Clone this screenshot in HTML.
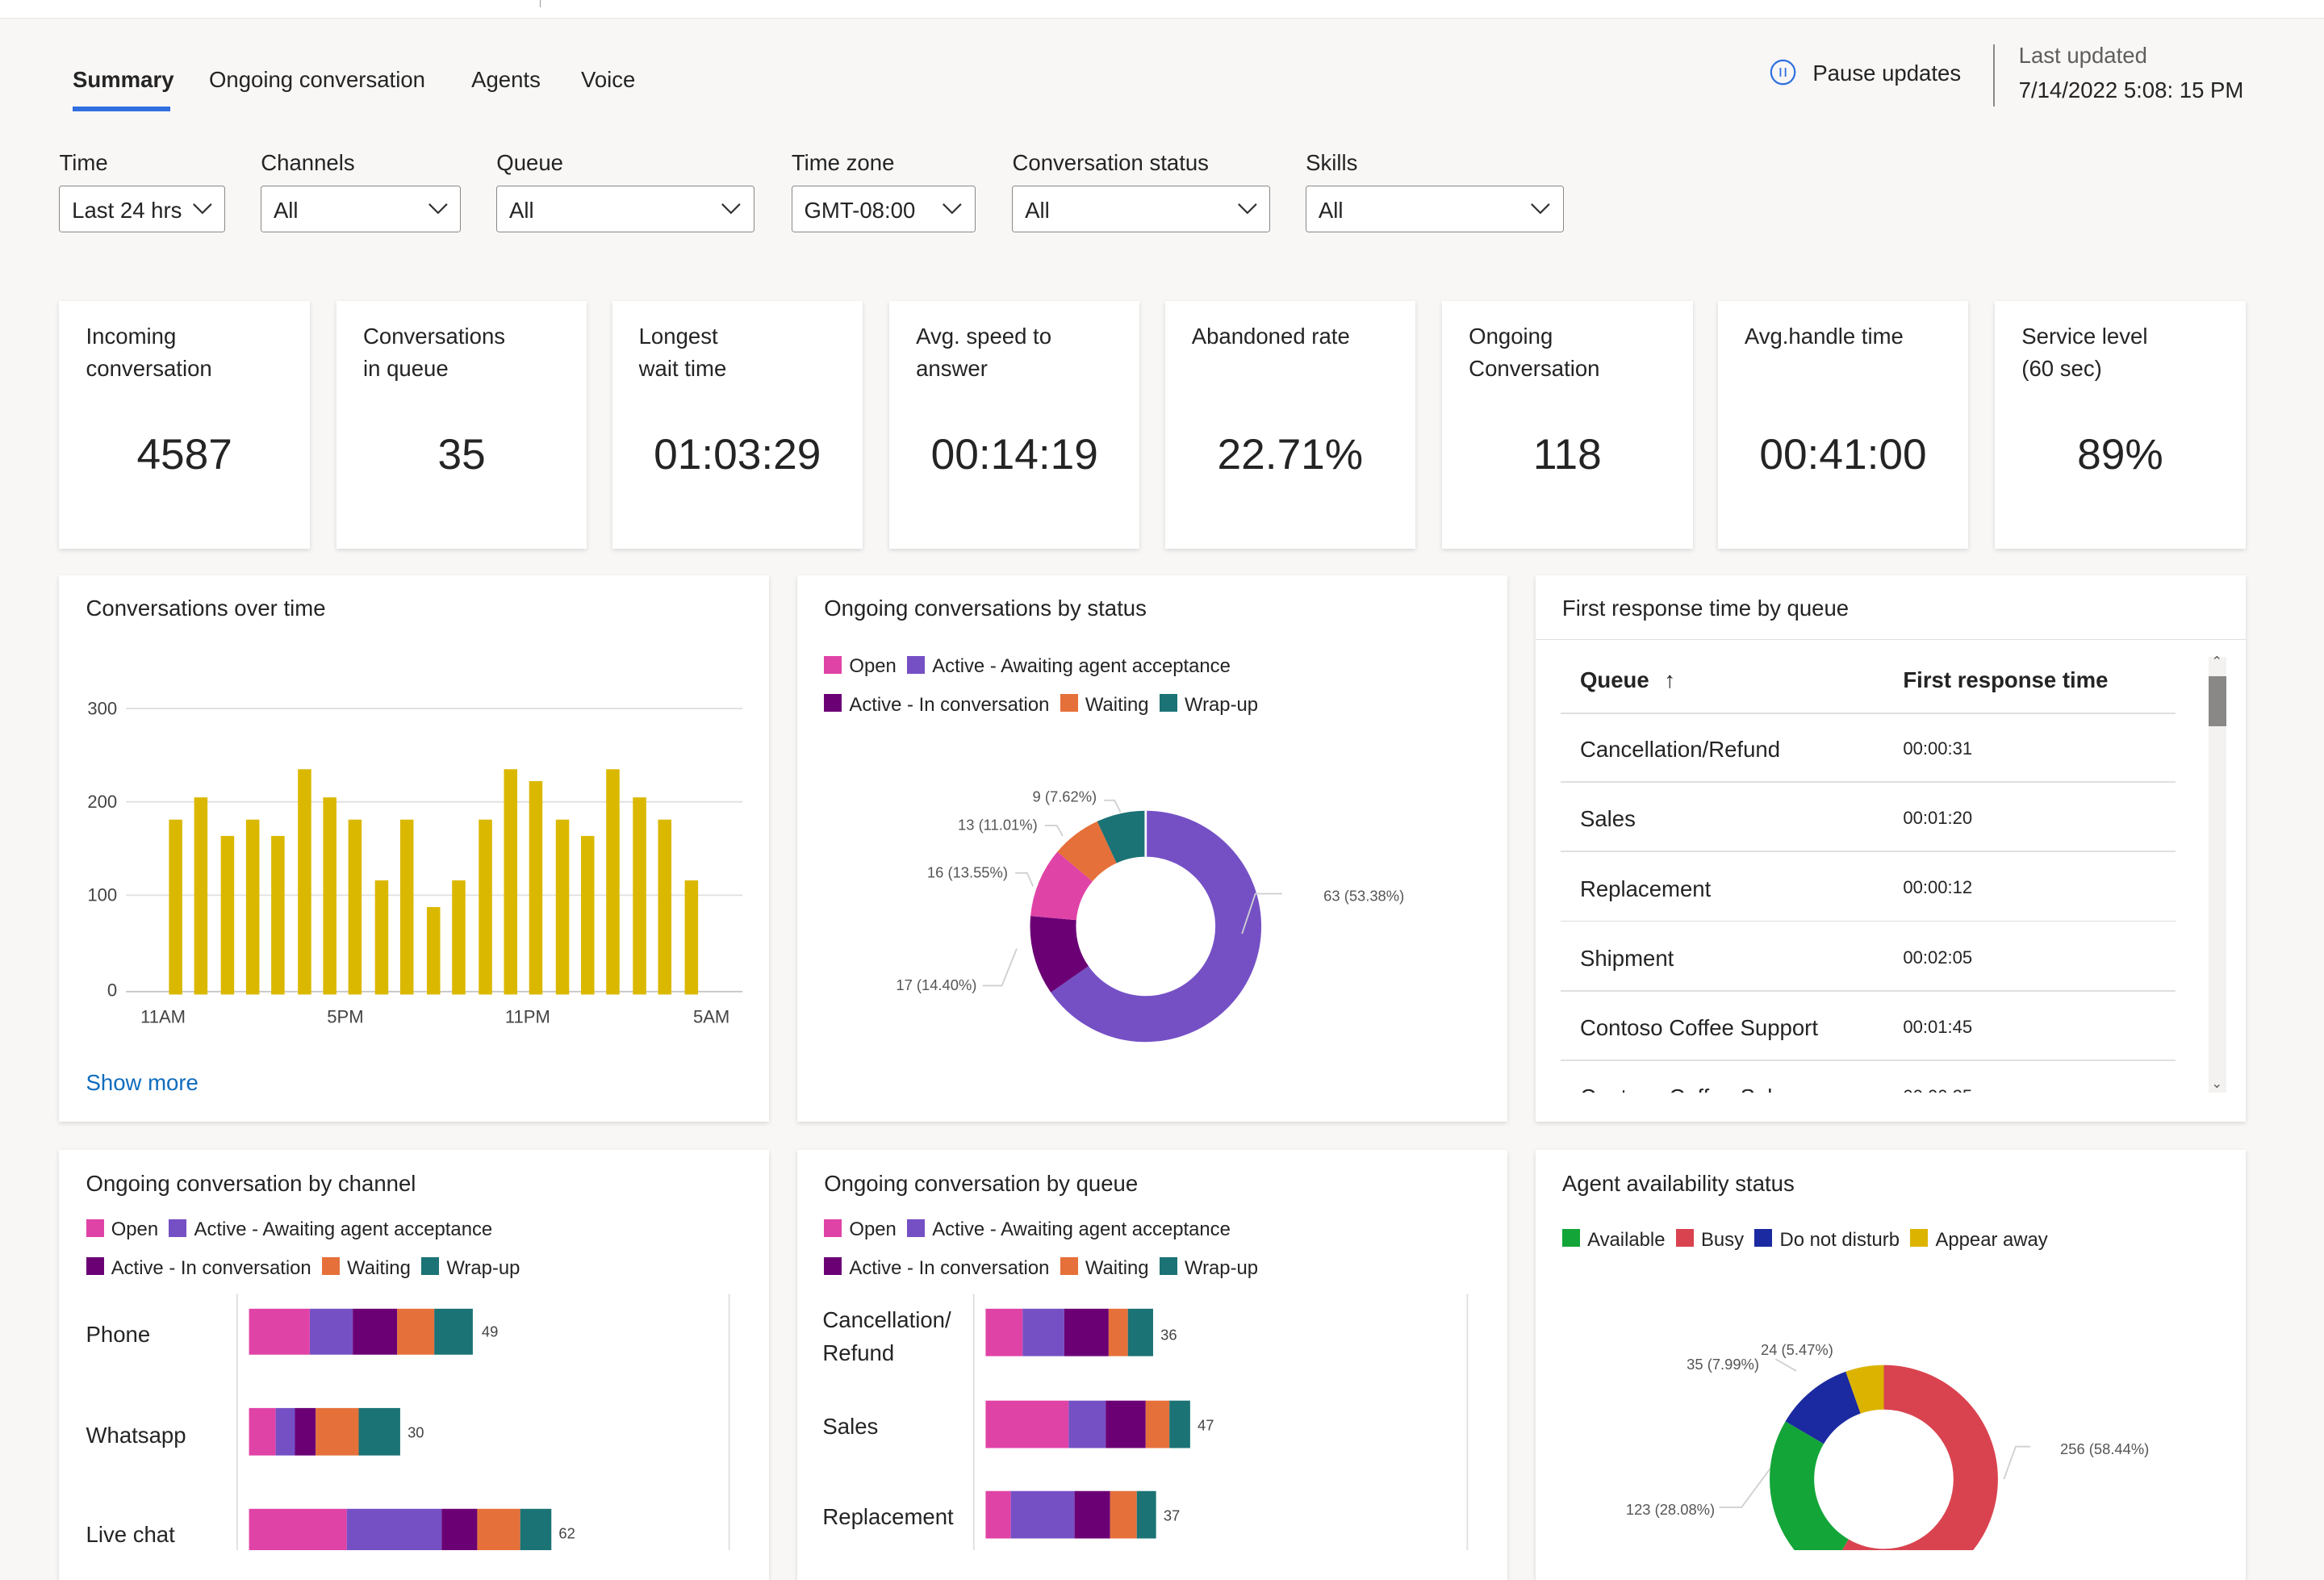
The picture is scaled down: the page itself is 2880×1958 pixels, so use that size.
<!DOCTYPE html>
<html><head><meta charset="utf-8"><style>
html,body{margin:0;padding:0;}
body{width:2880px;height:1920px;overflow:hidden;background:#f8f7f6;}
#r{zoom:1.83673;width:1568px;height:1046px;position:relative;font-family:"Liberation Sans",sans-serif;color:#242424;}
.a{position:absolute;white-space:nowrap;}
.card{position:absolute;background:#fff;box-shadow:0 1px 3px rgba(0,0,0,.13);}
.lbl{font-size:15px;}
.sel{position:absolute;top:125px;height:32px;border:1px solid #8a8886;border-radius:2px;background:#fff;box-sizing:border-box;font-size:15px;}
.sel span{position:absolute;left:8px;top:8px;}
.sel svg{position:absolute;right:8px;top:11px;}
.kt{position:absolute;left:18px;top:13px;font-size:15px;line-height:22px;}
.kv{position:absolute;left:0;right:0;top:87px;text-align:center;font-size:29px;}
.ct{position:absolute;left:18px;top:14px;font-size:15px;}
.sq{display:inline-block;width:12px;height:12px;vertical-align:-1px;margin-right:5px;}
.lg{font-size:13px;}
.row{position:absolute;left:1053px;width:415px;height:1px;background:#e1dfdd;}
</style></head><body><div id="r">
<div class="a" style="left:0;top:0;width:1568px;height:12px;background:#fff;border-bottom:1px solid #e8e6e4"></div>
<div class="a" style="left:364px;top:0;width:1px;height:5px;background:#999"></div>
<div class="a lbl" style="left:49px;top:45px;font-weight:bold;color:#242424">Summary</div>
<div class="a" style="left:49px;top:72px;width:66px;height:3px;background:#2f6fdf"></div>
<div class="a lbl" style="left:141px;top:45px">Ongoing conversation</div>
<div class="a lbl" style="left:318px;top:45px">Agents</div>
<div class="a lbl" style="left:392px;top:45px">Voice</div>
<svg class="a" style="left:1194px;top:40px" width="18" height="18"><circle cx="9" cy="9" r="8" fill="none" stroke="#2f6fdf" stroke-width="1.2"/><line x1="7.3" y1="6" x2="7.3" y2="12" stroke="#2f6fdf"/><line x1="10.7" y1="6" x2="10.7" y2="12" stroke="#2f6fdf"/></svg>
<div class="a lbl" style="left:1223px;top:41px">Pause updates</div>
<div class="a" style="left:1345px;top:30px;width:1px;height:42px;background:#8a8886"></div>
<div class="a lbl" style="left:1362px;top:29px;color:#605e5c">Last updated</div>
<div class="a lbl" style="left:1362px;top:52px">7/14/2022 5:08: 15 PM</div>

<div class="a lbl" style="left:40px;top:101px">Time</div>
<div class="a lbl" style="left:176px;top:101px">Channels</div>
<div class="a lbl" style="left:335px;top:101px">Queue</div>
<div class="a lbl" style="left:534px;top:101px">Time zone</div>
<div class="a lbl" style="left:683px;top:101px">Conversation status</div>
<div class="a lbl" style="left:881px;top:101px">Skills</div>
<div class="sel" style="left:40px;width:112px"><span>Last 24 hrs</span><svg width="14" height="9"><path d="M1 1L7 7L13 1" fill="none" stroke="#323130" stroke-width="1.2"/></svg></div>
<div class="sel" style="left:176px;width:135px"><span>All</span><svg width="14" height="9"><path d="M1 1L7 7L13 1" fill="none" stroke="#323130" stroke-width="1.2"/></svg></div>
<div class="sel" style="left:335px;width:174px"><span>All</span><svg width="14" height="9"><path d="M1 1L7 7L13 1" fill="none" stroke="#323130" stroke-width="1.2"/></svg></div>
<div class="sel" style="left:534px;width:124px"><span>GMT-08:00</span><svg width="14" height="9"><path d="M1 1L7 7L13 1" fill="none" stroke="#323130" stroke-width="1.2"/></svg></div>
<div class="sel" style="left:683px;width:174px"><span>All</span><svg width="14" height="9"><path d="M1 1L7 7L13 1" fill="none" stroke="#323130" stroke-width="1.2"/></svg></div>
<div class="sel" style="left:881px;width:174px"><span>All</span><svg width="14" height="9"><path d="M1 1L7 7L13 1" fill="none" stroke="#323130" stroke-width="1.2"/></svg></div>

<div class="card" style="left:40px;top:203px;width:169px;height:167px"><div class="kt">Incoming<br>conversation</div><div class="kv">4587</div></div>
<div class="card" style="left:227px;top:203px;width:169px;height:167px"><div class="kt">Conversations<br>in queue</div><div class="kv">35</div></div>
<div class="card" style="left:413px;top:203px;width:169px;height:167px"><div class="kt">Longest<br>wait time</div><div class="kv">01:03:29</div></div>
<div class="card" style="left:600px;top:203px;width:169px;height:167px"><div class="kt">Avg. speed to<br>answer</div><div class="kv">00:14:19</div></div>
<div class="card" style="left:786px;top:203px;width:169px;height:167px"><div class="kt">Abandoned rate</div><div class="kv">22.71%</div></div>
<div class="card" style="left:973px;top:203px;width:169px;height:167px"><div class="kt">Ongoing<br>Conversation</div><div class="kv">118</div></div>
<div class="card" style="left:1159px;top:203px;width:169px;height:167px"><div class="kt">Avg.handle time</div><div class="kv">00:41:00</div></div>
<div class="card" style="left:1346px;top:203px;width:169px;height:167px"><div class="kt">Service level<br>(60 sec)</div><div class="kv">89%</div></div>

<!-- row 2 -->
<div class="card" style="left:40px;top:388px;width:479px;height:369px"><div class="ct">Conversations over time</div>
<div class="a" style="left:18px;top:334px;font-size:15px;color:#0f6cbd">Show more</div></div>
<svg class="a" style="left:0;top:0" width="1568" height="1046">
<g font-family="Liberation Sans" font-size="12" fill="#444">
<text x="79" y="482" text-anchor="end">300</text><text x="79" y="545" text-anchor="end">200</text><text x="79" y="608" text-anchor="end">100</text><text x="79" y="672" text-anchor="end">0</text>
<text x="110" y="690" text-anchor="middle">11AM</text><text x="233" y="690" text-anchor="middle">5PM</text><text x="356" y="690" text-anchor="middle">11PM</text><text x="480" y="690" text-anchor="middle">5AM</text>
</g>
<g stroke="#e1dfdd"><line x1="85" y1="478" x2="501" y2="478"/><line x1="85" y1="541" x2="501" y2="541"/><line x1="85" y1="604" x2="501" y2="604"/><line x1="85" y1="669" x2="501" y2="669" stroke="#c8c6c4"/></g>
<g fill="#dbb800">
<rect x="114" y="553" width="9" height="118"/><rect x="131" y="538" width="9" height="133"/><rect x="149" y="564" width="9" height="107"/><rect x="166" y="553" width="9" height="118"/><rect x="183" y="564" width="9" height="107"/><rect x="201" y="519" width="9" height="152"/><rect x="218" y="538" width="9" height="133"/><rect x="235" y="553" width="9" height="118"/><rect x="253" y="594" width="9" height="77"/><rect x="270" y="553" width="9" height="118"/><rect x="288" y="612" width="9" height="59"/><rect x="305" y="594" width="9" height="77"/><rect x="323" y="553" width="9" height="118"/><rect x="340" y="519" width="9" height="152"/><rect x="357" y="527" width="9" height="144"/><rect x="375" y="553" width="9" height="118"/><rect x="392" y="564" width="9" height="107"/><rect x="409" y="519" width="9" height="152"/><rect x="427" y="538" width="9" height="133"/><rect x="444" y="553" width="9" height="118"/><rect x="462" y="594" width="9" height="77"/>
</g>
</svg>

<div class="card" style="left:538px;top:388px;width:479px;height:369px"><div class="ct">Ongoing conversations by status</div>
<div class="a lg" style="left:18px;top:54px"><span class="sq" style="background:#e043a6"></span>Open &nbsp;<span class="sq" style="background:#7550c5"></span>Active - Awaiting agent acceptance</div>
<div class="a lg" style="left:18px;top:80px"><span class="sq" style="background:#6b0075"></span>Active - In conversation &nbsp;<span class="sq" style="background:#e6703a"></span>Waiting &nbsp;<span class="sq" style="background:#1b7375"></span>Wrap-up</div></div>

<div class="card" style="left:1036px;top:388px;width:479px;height:369px"><div class="ct">First response time by queue</div>
<div class="a" style="left:0;top:43px;width:479px;height:1px;background:#e1dfdd"></div></div>
<div class="a" style="left:1066px;top:450px;font-size:15px;font-weight:bold;color:#242424">Queue <span style="font-weight:normal;margin-left:6px">↑</span></div>
<div class="a" style="left:1284px;top:450px;font-size:15px;font-weight:bold">First response time</div>
<div class="row" style="top:481px"></div><div class="row" style="top:527px"></div><div class="row" style="top:574px"></div><div class="row" style="top:621px"></div><div class="row" style="top:668px"></div><div class="row" style="top:715px"></div>
<div class="a lbl" style="left:1066px;top:497px">Cancellation/Refund</div><div class="a" style="left:1284px;top:498px;font-size:12px">00:00:31</div>
<div class="a lbl" style="left:1066px;top:544px">Sales</div><div class="a" style="left:1284px;top:545px;font-size:12px">00:01:20</div>
<div class="a lbl" style="left:1066px;top:591px">Replacement</div><div class="a" style="left:1284px;top:592px;font-size:12px">00:00:12</div>
<div class="a lbl" style="left:1066px;top:638px">Shipment</div><div class="a" style="left:1284px;top:639px;font-size:12px">00:02:05</div>
<div class="a lbl" style="left:1066px;top:685px">Contoso Coffee Support</div><div class="a" style="left:1284px;top:686px;font-size:12px">00:01:45</div>
<div class="a" style="left:1053px;top:726px;width:420px;height:11px;overflow:hidden"><div class="a lbl" style="left:13px;top:6px">Contoso Coffee Sales</div><div class="a" style="left:231px;top:7px;font-size:12px">00:00:25</div></div>
<div class="a" style="left:1490px;top:443px;width:12px;height:294px;background:#f3f2f1"></div>
<div class="a" style="left:1490px;top:456px;width:12px;height:34px;background:#8a8886"></div>
<div class="a" style="left:1492px;top:441px;font-size:9px;color:#605e5c">⌃</div>
<div class="a" style="left:1492px;top:726px;font-size:9px;color:#605e5c">⌄</div>

<!-- row 3 -->
<div class="card" style="left:40px;top:776px;width:479px;height:290px"><div class="ct">Ongoing conversation by channel</div>
<div class="a lg" style="left:18px;top:46px"><span class="sq" style="background:#e043a6"></span>Open &nbsp;<span class="sq" style="background:#7550c5"></span>Active - Awaiting agent acceptance</div>
<div class="a lg" style="left:18px;top:72px"><span class="sq" style="background:#6b0075"></span>Active - In conversation &nbsp;<span class="sq" style="background:#e6703a"></span>Waiting &nbsp;<span class="sq" style="background:#1b7375"></span>Wrap-up</div></div>
<div class="card" style="left:538px;top:776px;width:479px;height:290px"><div class="ct">Ongoing conversation by queue</div>
<div class="a lg" style="left:18px;top:46px"><span class="sq" style="background:#e043a6"></span>Open &nbsp;<span class="sq" style="background:#7550c5"></span>Active - Awaiting agent acceptance</div>
<div class="a lg" style="left:18px;top:72px"><span class="sq" style="background:#6b0075"></span>Active - In conversation &nbsp;<span class="sq" style="background:#e6703a"></span>Waiting &nbsp;<span class="sq" style="background:#1b7375"></span>Wrap-up</div></div>
<div class="card" style="left:1036px;top:776px;width:479px;height:290px"><div class="ct">Agent availability status</div>
<div class="a lg" style="left:18px;top:53px"><span class="sq" style="background:#13a538"></span>Available &nbsp;<span class="sq" style="background:#d9434f"></span>Busy &nbsp;<span class="sq" style="background:#1b2aa0"></span>Do not disturb &nbsp;<span class="sq" style="background:#dcb400"></span>Appear away</div></div>

<div class="a lbl" style="left:58px;top:892px">Phone</div>
<div class="a lbl" style="left:58px;top:960px">Whatsapp</div>
<div class="a lbl" style="left:58px;top:1027px">Live chat</div>
<div class="a lbl" style="left:555px;top:880px;line-height:22px">Cancellation/<br>Refund</div>
<div class="a lbl" style="left:555px;top:954px">Sales</div>
<div class="a lbl" style="left:555px;top:1015px">Replacement</div>

<svg class="a" style="left:0;top:0" width="1568" height="1046">
<g stroke="#e1dfdd"><line x1="160" y1="873" x2="160" y2="1046"/><line x1="492" y1="873" x2="492" y2="1046"/><line x1="657" y1="873" x2="657" y2="1046"/><line x1="990" y1="873" x2="990" y2="1046"/></g>
<g>
<rect x="168" y="883" width="41" height="31" fill="#e043a6"/><rect x="209" y="883" width="29" height="31" fill="#7550c5"/><rect x="238" y="883" width="30" height="31" fill="#6b0075"/><rect x="268" y="883" width="25" height="31" fill="#e6703a"/><rect x="293" y="883" width="26" height="31" fill="#1b7375"/>
<rect x="168" y="950" width="18" height="32" fill="#e043a6"/><rect x="186" y="950" width="13" height="32" fill="#7550c5"/><rect x="199" y="950" width="14" height="32" fill="#6b0075"/><rect x="213" y="950" width="29" height="32" fill="#e6703a"/><rect x="242" y="950" width="28" height="32" fill="#1b7375"/>
<rect x="168" y="1018" width="66" height="32" fill="#e043a6"/><rect x="234" y="1018" width="64" height="32" fill="#7550c5"/><rect x="298" y="1018" width="24" height="32" fill="#6b0075"/><rect x="322" y="1018" width="29" height="32" fill="#e6703a"/><rect x="351" y="1018" width="21" height="32" fill="#1b7375"/>
<rect x="665" y="883" width="25" height="32" fill="#e043a6"/><rect x="690" y="883" width="28" height="32" fill="#7550c5"/><rect x="718" y="883" width="30" height="32" fill="#6b0075"/><rect x="748" y="883" width="13" height="32" fill="#e6703a"/><rect x="761" y="883" width="17" height="32" fill="#1b7375"/>
<rect x="665" y="945" width="56" height="32" fill="#e043a6"/><rect x="721" y="945" width="25" height="32" fill="#7550c5"/><rect x="746" y="945" width="27" height="32" fill="#6b0075"/><rect x="773" y="945" width="16" height="32" fill="#e6703a"/><rect x="789" y="945" width="14" height="32" fill="#1b7375"/>
<rect x="665" y="1006" width="17" height="32" fill="#e043a6"/><rect x="682" y="1006" width="43" height="32" fill="#7550c5"/><rect x="725" y="1006" width="24" height="32" fill="#6b0075"/><rect x="749" y="1006" width="18" height="32" fill="#e6703a"/><rect x="767" y="1006" width="13" height="32" fill="#1b7375"/>
</g>
<g font-family="Liberation Sans" font-size="10" fill="#444">
<text x="325" y="902">49</text><text x="275" y="970">30</text><text x="377" y="1038">62</text>
<text x="783" y="904">36</text><text x="808" y="965">47</text><text x="785" y="1026">37</text>
</g>
<g transform="translate(773,625) rotate(-90)" fill="none" stroke-width="31">
<circle r="62.5" stroke="#7550c5" stroke-dasharray="256.4 500"/>
<circle r="62.5" stroke="#6b0075" stroke-dasharray="43.6 500" stroke-dashoffset="-256.4"/>
<circle r="62.5" stroke="#e043a6" stroke-dasharray="38.2 500" stroke-dashoffset="-300"/>
<circle r="62.5" stroke="#e6703a" stroke-dasharray="27.3 500" stroke-dashoffset="-338.2"/>
<circle r="62.5" stroke="#1b7375" stroke-dasharray="27.2 500" stroke-dashoffset="-365.5"/>
</g>
<g stroke="#fff" stroke-width="1.5"><line x1="773" y1="547" x2="773" y2="578"/></g>
<g stroke="#d0d0d0" fill="none"><path d="M865 603H847L838 630"/><path d="M745 540H752L756 548"/><path d="M705 557H713L717 564"/><path d="M685 589H693L697 598"/><path d="M663 665H676L686 640"/>
<path d="M1370 976H1360L1352 998"/><path d="M1198 917L1212 925"/><path d="M1160 1017H1175L1195 990"/></g>
<g font-family="Liberation Sans" font-size="10" fill="#555">
<text x="893" y="608">63 (53.38%)</text><text x="740" y="541" text-anchor="end">9 (7.62%)</text><text x="700" y="560" text-anchor="end">13 (11.01%)</text><text x="680" y="592" text-anchor="end">16 (13.55%)</text><text x="659" y="668" text-anchor="end">17 (14.40%)</text>
<text x="1188" y="914">24 (5.47%)</text><text x="1138" y="924">35 (7.99%)</text><text x="1390" y="981">256 (58.44%)</text><text x="1157" y="1022" text-anchor="end">123 (28.08%)</text>
</g>
<g transform="translate(1271,998) rotate(-90)" fill="none" stroke-width="30">
<circle r="62" stroke="#d9434f" stroke-dasharray="227.6 500"/>
<circle r="62" stroke="#13a538" stroke-dasharray="97.4 500" stroke-dashoffset="-227.6"/>
<circle r="62" stroke="#1b2aa0" stroke-dasharray="43.3 500" stroke-dashoffset="-325"/>
<circle r="62" stroke="#dcb400" stroke-dasharray="21.3 500" stroke-dashoffset="-368.3"/>
</g>
</svg>
</div></body></html>
